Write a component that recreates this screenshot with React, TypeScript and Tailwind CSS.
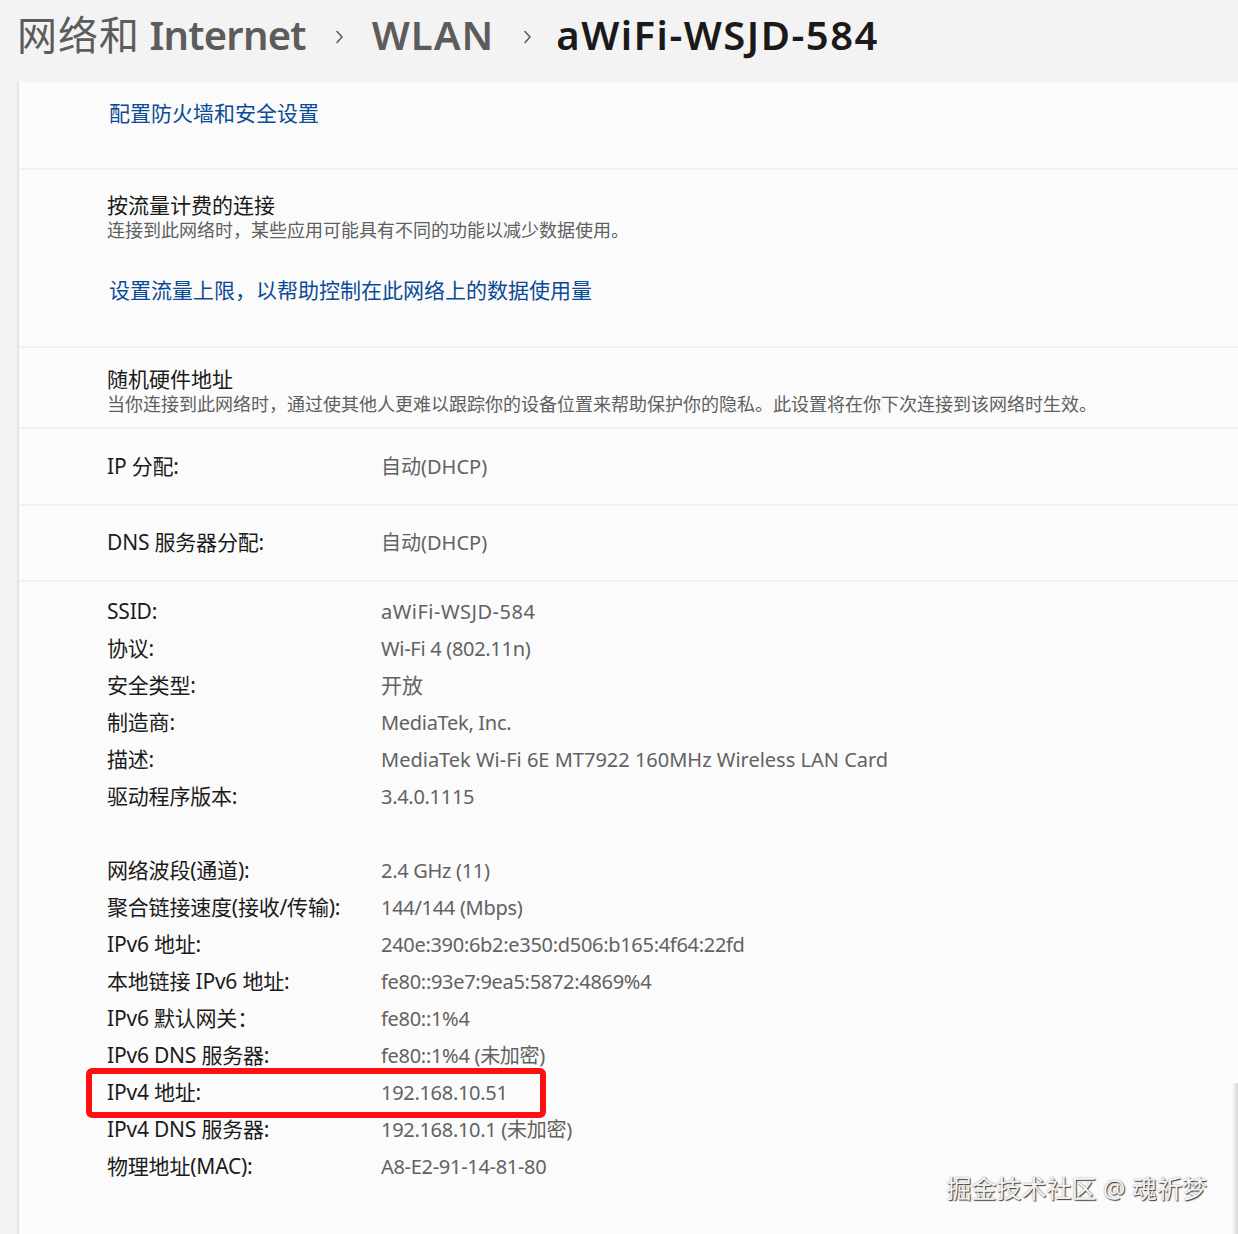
import React from "react";

const font = { fontFamily: '"Noto Sans", "Noto Sans CJK SC", sans-serif' };

function Chevron({ last }: { last?: boolean }) {
  return (
    <svg width="10" height="14" viewBox="0 0 10 14" className={(last ? "ml-[28px] mr-[24px]" : "mx-[28px]") + " mt-[4px]"}>
      <path d="M3 1.5 L8 7 L3 12.5" fill="none" stroke="#5c5c5c" strokeWidth="1.6" strokeLinecap="round" strokeLinejoin="round" />
    </svg>
  );
}

type Row = { k: string; v: string; hl?: boolean; cls?: string };

const group1: Row[] = [
  { k: "SSID:", v: "aWiFi-WSJD-584", cls: "text-[20px] tracking-[0.5px]" },
  { k: "协议:", v: "Wi-Fi 4 (802.11n)" },
  { k: "安全类型:", v: "开放", cls: "text-[21px]" },
  { k: "制造商:", v: "MediaTek, Inc." },
  { k: "描述:", v: "MediaTek Wi-Fi 6E MT7922 160MHz Wireless LAN Card", cls: "text-[20px]" },
  { k: "驱动程序版本:", v: "3.4.0.1115" },
];

const group2: Row[] = [
  { k: "网络波段(通道):", v: "2.4 GHz (11)" },
  { k: "聚合链接速度(接收/传输):", v: "144/144 (Mbps)" },
  { k: "IPv6 地址:", v: "240e:390:6b2:e350:d506:b165:4f64:22fd" },
  { k: "本地链接 IPv6 地址:", v: "fe80::93e7:9ea5:5872:4869%4" },
  { k: "IPv6 默认网关：", v: "fe80::1%4" },
  { k: "IPv6 DNS 服务器:", v: "fe80::1%4 (未加密)" },
  { k: "IPv4 地址:", v: "192.168.10.51", hl: true },
  { k: "IPv4 DNS 服务器:", v: "192.168.10.1 (未加密)" },
  { k: "物理地址(MAC):", v: "A8-E2-91-14-81-80" },
];

function KV({ r }: { r: Row }) {
  const cls = r.cls ?? "text-[20px] tracking-[-0.3px]";
  return (
    <div className="relative flex h-[37px] items-center">
      <div className="w-[274px] shrink-0 text-[21px] tracking-[-0.2px] text-[#1b1b1b]">{r.k}</div>
      <div className={cls + " text-[#626262]"}>{r.v}</div>
      {r.hl && (
        <div className="pointer-events-none absolute left-[-21px] top-[-6px] h-[50px] w-[460px] rounded-[6px] border-[6px] border-[#ff1010]" />
      )}
    </div>
  );
}

export default function App() {
  return (
    <div style={font} className="relative h-[1234px] w-[1238px] overflow-hidden bg-[#f3f3f3]">
      <div className="flex h-[82px] items-center pl-[17px] pb-[12px]">
        <span className="text-[40px] text-[#5c5c5c]">
          <span className="font-normal tracking-[1px]">网络和</span>
          <span className="font-semibold tracking-[-0.8px]"> Internet</span>
        </span>
        <Chevron />
        <span className="text-[40px] font-semibold tracking-[1px] text-[#5c5c5c]">WLAN</span>
        <Chevron last />
        <span className="text-[40px] font-semibold tracking-[1.5px] text-[#1a1a1a]">aWiFi-WSJD-584</span>
      </div>

      <div className="ml-[17px] flex h-[1152px] flex-col border-l-2 border-[#e4e4e4] bg-[#fbfbfb]">
        <div className="flex h-[88px] flex-col border-b-2 border-[#f1f1f1] pl-[90px] pt-[16px]">
          <span className="text-[21px] text-[#0b4a97]">配置防火墙和安全设置</span>
        </div>

        <div className="flex h-[178px] flex-col border-b-2 border-[#f1f1f1] pl-[88px] pt-[21px]">
          <span className="text-[21px] leading-[28px] text-[#1b1b1b]">按流量计费的连接</span>
          <span className="text-[18px] leading-[22px] text-[#5f5f5f]">连接到此网络时，某些应用可能具有不同的功能以减少数据使用。</span>
          <span className="mt-[34px] pl-[2px] text-[21px] text-[#0b4a97]">设置流量上限，以帮助控制在此网络上的数据使用量</span>
        </div>

        <div className="flex h-[81px] flex-col border-b-2 border-[#f1f1f1] pl-[88px] pt-[17px]">
          <span className="text-[21px] leading-[28px] text-[#1b1b1b]">随机硬件地址</span>
          <span className="text-[18px] leading-[22px] text-[#5f5f5f]">当你连接到此网络时，通过使其他人更难以跟踪你的设备位置来帮助保护你的隐私。此设置将在你下次连接到该网络时生效。</span>
        </div>

        <div className="flex h-[77px] items-center border-b-2 border-[#f1f1f1] pl-[88px]">
          <div className="w-[274px] shrink-0 text-[21px] tracking-[-0.2px] text-[#1b1b1b]">IP 分配:</div>
          <div className="text-[20px] text-[#626262]">自动(DHCP)</div>
        </div>

        <div className="flex h-[76px] items-center border-b-2 border-[#f1f1f1] pl-[88px]">
          <div className="w-[274px] shrink-0 text-[21px] tracking-[-0.2px] text-[#1b1b1b]">DNS 服务器分配:</div>
          <div className="text-[20px] text-[#626262]">自动(DHCP)</div>
        </div>

        <div className="flex flex-col pl-[88px] pt-[11px]">
          {group1.map((r) => (
            <KV key={r.k} r={r} />
          ))}
          <div className="h-[37px]" />
          {group2.map((r) => (
            <KV key={r.k} r={r} />
          ))}
        </div>
      </div>

      <div className="pointer-events-none absolute right-0 top-[1083px] bottom-0 w-[6px] bg-gradient-to-l from-[#d6d6d6] to-transparent" />

      <div className="pointer-events-none absolute right-[31px] top-[1170px] text-[25px] text-[#f4f4f4] [text-shadow:1px_1px_1px_rgba(0,0,0,0.75),0_0_2px_rgba(0,0,0,0.35)]">
        掘金技术社区 @ 魂祈梦
      </div>
    </div>
  );
}
